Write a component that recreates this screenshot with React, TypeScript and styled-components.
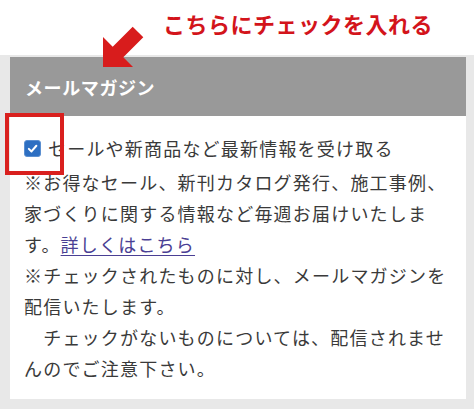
import React from "react";
import styled, { createGlobalStyle } from "styled-components";

const GlobalStyle = createGlobalStyle`
  html, body {
    margin: 0;
    padding: 0;
    background: #ffffff;
  }
  body {
    font-family: "Noto Sans CJK JP", "Noto Sans", sans-serif;
    color: #3a3a3a;
  }
`;

const Page = styled.div`
  position: relative;
  width: 474px;
  height: 409px;
  overflow: hidden;
  display: flex;
  flex-direction: column;
`;

const Callout = styled.div`
  height: 55px;
  flex: none;
  display: flex;
  align-items: center;
  padding-left: 163px;
  padding-bottom: 9px;
  box-sizing: border-box;
  color: #d3141b;
  font-size: 22px;
  font-weight: 700;
  letter-spacing: 0.5px;
  line-height: 1;
`;

const Arrow = styled.svg`
  position: absolute;
  left: 0;
  top: 0;
  pointer-events: none;
`;

const Frame = styled.section`
  flex: 1;
  background: #e8e8e8;
  padding: 2px 8px 10px 10px;
  display: flex;
  flex-direction: column;
`;

const Header = styled.h2`
  margin: 0;
  height: 59px;
  flex: none;
  display: flex;
  align-items: center;
  padding-left: 15px;
  background: #999999;
  color: #ffffff;
  font-size: 18px;
  font-weight: 700;
  letter-spacing: 0.6px;
`;

const Body = styled.div`
  flex: 1;
  background: #ffffff;
  padding: 17px 18px 0 14px;
  font-size: 18px;
  letter-spacing: 1.2px;
  line-height: 31px;
`;

const CheckRow = styled.label`
  display: flex;
  align-items: center;
  margin-bottom: 3px;
  cursor: pointer;
`;

const HiddenInput = styled.input`
  position: absolute;
  opacity: 0;
  width: 0;
  height: 0;
`;

const Box = styled.span<{ $on: boolean }>`
  width: 17px;
  height: 17px;
  flex: none;
  box-sizing: border-box;
  border-radius: 3px;
  background: ${(p) => (p.$on ? "#2d6fc2" : "#ffffff")};
  border: 1px solid ${(p) => (p.$on ? "#5b8fd0" : "#767676")};
  display: flex;
  align-items: center;
  justify-content: center;
  margin-right: 7px;
`;

const Note = styled.p`
  margin: 0;
`;

const Link = styled.a`
  color: #4a3f94;
  text-decoration: underline;
  text-underline-offset: 3px;
`;

const Marker = styled.div`
  position: absolute;
  left: 5px;
  top: 113px;
  width: 59px;
  height: 62px;
  box-sizing: border-box;
  border: 4px solid #d9201e;
  pointer-events: none;
`;

export default function App() {
  const [checked, setChecked] = React.useState(true);

  return (
    <>
      <GlobalStyle />
      <Page>
        <Callout>こちらにチェックを入れる</Callout>
        <Frame>
          <Header>メールマガジン</Header>
          <Body>
            <CheckRow>
              <HiddenInput
                type="checkbox"
                checked={checked}
                onChange={(e) => setChecked(e.target.checked)}
              />
              <Box $on={checked}>
                {checked && (
                  <svg width="11" height="11" viewBox="0 0 12 12">
                    <path
                      d="M2 6.4 L4.9 9.2 L10.2 3"
                      fill="none"
                      stroke="#ffffff"
                      strokeWidth="2.2"
                      strokeLinecap="round"
                      strokeLinejoin="round"
                    />
                  </svg>
                )}
              </Box>
              セールや新商品など最新情報を受け取る
            </CheckRow>
            <Note>
              ※お得なセール、新刊カタログ発行、施工事例、家づくりに関する情報など毎週お届けいたします。
              <Link href="#">詳しくはこちら</Link>
            </Note>
            <Note>
              ※チェックされたものに対し、メールマガジンを配信いたします。
              <br />
              {"\u3000"}チェックがないものについては、配信されませんのでご注意下さい。
            </Note>
          </Body>
        </Frame>
        <Arrow width="474" height="120" viewBox="0 0 474 120">
          <polygon
            points="103,67 103,37 112.7,46.7 132.7,26.7 143.3,37.3 123.3,57.3 133,67"
            fill="#d81c1c"
          />
        </Arrow>
        <Marker />
      </Page>
    </>
  );
}
